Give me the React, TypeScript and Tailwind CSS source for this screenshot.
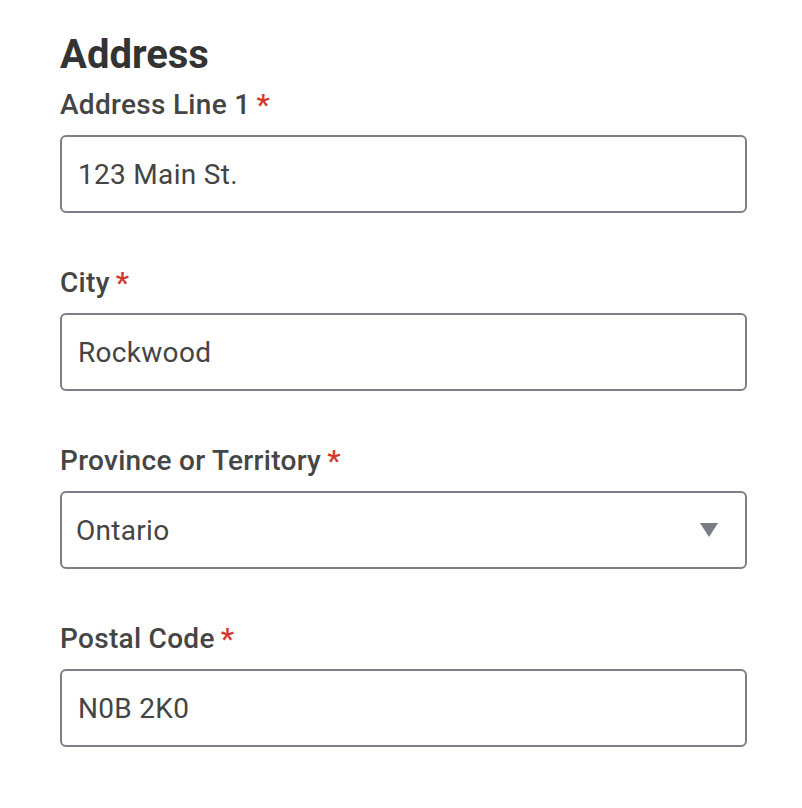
import { ReactNode } from 'react'

function Field({ label, children }: { label: string; children: ReactNode }) {
  return (
    <div className="flex flex-col">
      <label className="flex items-start text-[28px] leading-[32px] font-medium tracking-[0.3px] text-[#454545]">
        {label}
        <span className="ml-[6px] text-[30px] leading-[32px] text-[#d4382c]">*</span>
      </label>
      <div className="mt-[14px]">{children}</div>
    </div>
  )
}

function TextInput({ value }: { value: string }) {
  return (
    <div className="h-[78px] flex items-center rounded-[6px] border-2 border-[#7b7f88] bg-white px-[16px] pt-[2px] text-[28px] tracking-[0.3px] text-[#444]">
      {value}
    </div>
  )
}

export default function App() {
  return (
    <main
      className="min-h-[808px] bg-white pl-[60px] pr-[55px] pt-[31px]"
      style={{ fontFamily: 'Roboto, "Liberation Sans", sans-serif' }}
    >
      <h1 className="text-[40px] leading-[48px] font-bold text-[#333]">Address</h1>
      <div className="mt-[10px] flex flex-col gap-[54px]">
        <Field label="Address Line 1">
          <TextInput value="123 Main St." />
        </Field>
        <Field label="City">
          <TextInput value="Rockwood" />
        </Field>
        <Field label="Province or Territory">
          <div className="h-[78px] flex items-center justify-between rounded-[6px] border-2 border-[#7b7f88] bg-white pl-[14px] pr-[27px] pt-[2px] text-[28px] tracking-[0.3px] text-[#444]">
            <span>Ontario</span>
            <svg width="18" height="14" viewBox="0 0 18 14" className="-mt-[2px]">
              <path d="M0 0 H18 L9 14 Z" fill="#787d86" />
            </svg>
          </div>
        </Field>
        <Field label="Postal Code">
          <TextInput value="N0B 2K0" />
        </Field>
      </div>
    </main>
  )
}
